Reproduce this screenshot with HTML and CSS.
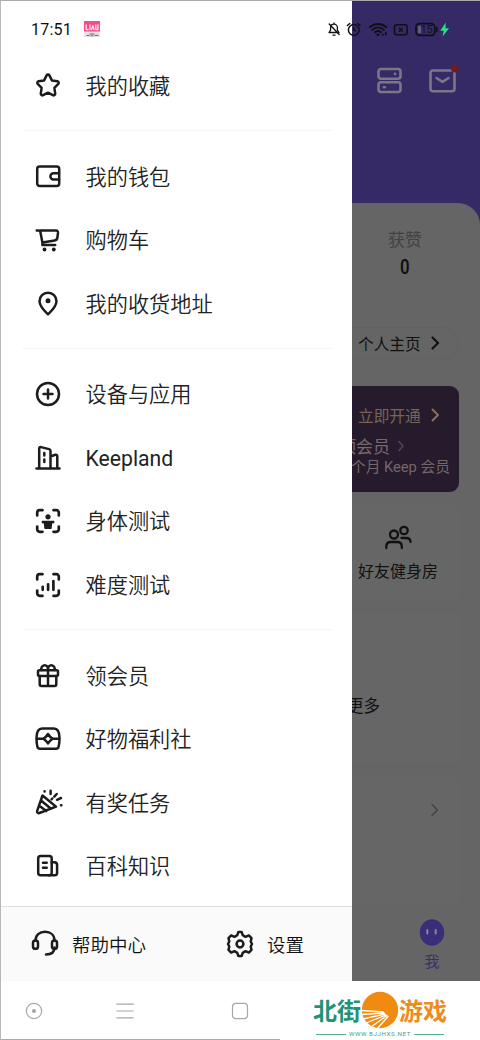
FILE: index.html
```html
<!DOCTYPE html>
<html lang="zh-CN">
<head>
<meta charset="utf-8">
<title>Keep</title>
<link rel="stylesheet" href="styles.css">
</head>
<body>
<div class="phone">
  <div class="status">
    <span class="clock">17:51</span>
    <svg class="app-badge" width="16" height="16" viewBox="0 0 16 16"><rect width="16" height="16" rx="1" fill="#eadfe6"/><path d="M0 0h16v10.5H0z" fill="#ee4f8d"/><path d="M2.2 4v4.6h2M6 4v4.6M7.6 8.6l1.2-4 1.3 4M11.8 4v4.6h2M14 4v4.6" fill="none" stroke="#ffe3ee" stroke-width="1.3"/><path d="M3 14.5h2M6 13h4M7 14.8h2M11 14.4h3" stroke="#60545c" stroke-width=".9"/></svg>
    <svg class="signals" width="124" height="18" viewBox="0 0 124 18" fill="none" stroke="#101014" stroke-width="1.5" stroke-linecap="round" stroke-linejoin="round">
      <path d="M2 12.500h10l-1.600-2.300V7.500a3.400 3.400 0 0 0-6.800 0v2.700zM6 15.200h2M7 3.800V3M2.200 4l10 10.500" stroke-width="1.300"/>
      <circle cx="26.800" cy="10" r="5.400"/><path d="M26.800 7.400V10l1.700.9M20.400 5.500l2.400-2M33.200 5.500l-2.400-2"/>
      <path d="M42.800 7.200c5-4.300 11.500-4.300 16.500 0M45.300 9.800c3.600-3 8-3 11.500 0M48 12.200c2-1.500 4-1.500 6 0M50.100 14.700h1.700M55.800 14.700h.1M58.800 13v1.500" stroke-width="1.900"/>
      <rect x="67.500" y="4.700" width="12.600" height="10" rx="2"/><path d="M72.300 8.200l3 3M75.300 8.200l-3 3"/>
      <rect x="89" y="3.700" width="18.800" height="11.600" rx="3.500" stroke-width="1.700"/><path d="M109.900 7.500v4"/>
      <path d="M91.300 6h2.500v7h-2.500z" fill="#6a6285" stroke="none"/>
      <text x="93.800" y="13.200" class="battery-level">15</text>
      <path d="M118.800 2.500l-5.500 8.200h3.500l-1.200 5.800 6.400-8.200h-3.600z" fill="#2fe08a" stroke="none"/>
    </svg>
  </div>

  <div class="screen">
    <aside class="drawer">
      <nav class="menu">
        <section class="group">
          <a class="row"><svg viewBox="0 0 32 32"><path d="M14.600 5.400a1.600 1.600 0 0 1 2.800 0l2.500 5 5.600.9a1.600 1.600 0 0 1 .8 2.600l-3.900 4 .8 5.700a1.600 1.600 0 0 1-2.300 1.600L16 22.700l-4.900 2.500a1.600 1.600 0 0 1-2.300-1.600l.8-5.700-3.900-4a1.600 1.600 0 0 1 .8-2.600l5.600-.9z"/></svg><span>我的收藏</span></a>
        </section>
        <section class="group">
          <a class="row"><svg viewBox="0 0 32 32"><rect x="5.200" y="5.500" width="22" height="19.500" rx="2.500"/><path d="M27 12.200h-5.500a3.100 3.100 0 0 0 0 6.200H27"/></svg><span>我的钱包</span></a>
          <a class="row"><svg viewBox="0 0 32 32"><path d="M4.700 6.600h1.900c1 0 1.600.5 1.800 1.500l2 10.500 12.300-2.200c1.800-.3 2.500-1.100 2.700-2.900l.6-4.600c.1-1.400-.5-2.300-2-2.300H8M10.400 18.600v2.400h12.800"/><circle cx="12.500" cy="25.500" r="1.900" class="solid"/><circle cx="21.800" cy="25.500" r="1.900" class="solid"/></svg><span>购物车</span></a>
          <a class="row"><svg viewBox="0 0 32 32"><path d="M16 26.300C11.500 22 7.500 18 7.500 13.200a8.500 8.500 0 0 1 17 0c0 4.800-4 8.800-8.500 13.100z"/><circle cx="16" cy="12.800" r="2.500" class="solid"/></svg><span>我的收货地址</span></a>
        </section>
        <section class="group">
          <a class="row"><svg viewBox="0 0 32 32"><circle cx="16" cy="16" r="11"/><path d="M11.500 16h9M16 11.500v9"/></svg><span>设备与应用</span></a>
          <a class="row"><svg viewBox="0 0 32 32"><path d="M4.500 26.500h23M7.200 26V6.500c0-1.200.7-1.700 1.800-1.400l8 2c1 .3 1.500.8 1.500 1.800V26M18.500 14.500l4.800-1.700c1.200-.3 2 .3 2 1.500V26"/><path d="M12.300 11v2.600M12.300 17.500v2.600"/></svg><span class="latin">Keepland</span></a>
          <a class="row"><svg viewBox="0 0 32 32"><path class="corners" d="M5.200 10.500V7.700A2.500 2.500 0 0 1 7.700 5.200h2.800M21.500 5.200h2.800a2.500 2.500 0 0 1 2.500 2.500v2.800M5.200 21.500v2.800a2.500 2.500 0 0 0 2.500 2.500h2.800M21.500 26.800h2.800a2.500 2.500 0 0 0 2.500-2.500v-2.800"/><circle cx="16" cy="11.800" r="2.600" class="solid"/><path class="solid" d="M10.200 15.800h11.700c.8 0 .8 2.400 0 2.500l-1.700.3-.5 4.300c-.2.800-.6 1.200-1.400 1.200h-4.600c-.8 0-1.200-.4-1.400-1.200l-.5-4.300-1.600-.3c-.8-.1-.8-2.500 0-2.500z"/></svg><span>身体测试</span></a>
          <a class="row"><svg viewBox="0 0 32 32"><path class="corners" d="M5.200 10.500V7.700A2.500 2.500 0 0 1 7.700 5.200h2.800M21.500 5.200h2.800a2.500 2.500 0 0 1 2.500 2.500v2.800M5.200 21.500v2.800a2.500 2.500 0 0 0 2.500 2.500h2.800M21.500 26.800h2.800a2.500 2.500 0 0 0 2.500-2.500v-2.800"/><path class="corners" d="M10.700 17.800v3M16.100 15.300v5.500M21.400 12v8.800"/></svg><span>难度测试</span></a>
        </section>
        <section class="group">
          <a class="row"><svg viewBox="0 0 32 32"><rect x="6" y="10.300" width="20" height="5.600" rx="1.500"/><path d="M7.700 16v8.200c0 1.200.6 1.700 1.700 1.700h13.200c1.100 0 1.700-.5 1.700-1.700V16M16 10.300V26M9.500 10a3.200 3.200 0 0 1 6.300-2.500L16 10l.2-2.500A3.200 3.200 0 0 1 22.500 10"/></svg><span>领会员</span></a>
          <a class="row"><svg viewBox="0 0 32 32"><path d="M4.500 14.700c.2-5.500 2-9.100 5.500-9.100h12c3.500 0 5.300 3.600 5.500 9.100v1c0 3-.3 5.500-.9 8-.3 1.300-1.200 2-2.600 2H8c-1.400 0-2.300-.7-2.600-2-.6-2.500-.9-5-.9-8zM4.700 15.700H11M21 15.700h6.300M16 11c1.200 2 2.600 3.400 4.600 4.700-2 1.300-3.400 2.700-4.600 4.700-1.200-2-2.600-3.400-4.600-4.700 2-1.300 3.400-2.700 4.600-4.700z"/></svg><span>好物福利社</span></a>
          <a class="row"><svg viewBox="0 0 32 32"><path d="M10.500 8.500L5.200 23.800c-.5 1.700.5 2.700 2.200 2.200L24 19.600zM9 13.500l10 8.300M7 18.500l7.300 5.500"/><path d="M12.600 4.300v.2M18.600 3.700v3.300M24.700 7l-2.400 2.600M29 11l-4 1.800M29 18.300h.4M20.300 11.500l-.7.800"/></svg><span>有奖任务</span></a>
          <a class="row"><svg viewBox="0 0 32 32"><rect x="6.200" y="6" width="13.500" height="19.200" rx="2.500"/><path d="M19.700 12.300h2.600c1.800 0 2.800 1 2.800 2.800v8c0 1.300-.8 2.100-2.300 2.100h-6M11 12.700h3.700M11 17.700h3.700"/></svg><span>百科知识</span></a>
        </section>
      </nav>
      <footer class="tools">
        <a class="tool help"><svg viewBox="0 0 32 32"><path d="M6.500 12.500C6.500 7 10.500 3.800 16 3.800s9.500 3.200 9.500 8.700M25.500 19.500c0 4.500-3 6.900-8.500 6.900"/><rect x="4" y="12.500" width="5" height="8.300" rx="2.400"/><rect x="23" y="12.500" width="5" height="8.300" rx="2.400"/></svg><span>帮助中心</span></a>
        <a class="tool settings"><svg viewBox="0 0 32 32"><path d="M14.300 4h3.400l1 3.200 2.800 1.600 3.300-1.400 2.700 2.700-.8 3.400 1.300 2.500-1.300 2.500.8 3.400-2.700 2.700-3.300-1.400-2.800 1.600-1 3.200h-3.400l-1-3.200-2.800-1.600-3.300 1.400-2.700-2.700.8-3.400L4 16l1.300-2.500-.8-3.400 2.700-2.700 3.300 1.400 2.800-1.600z"/><circle cx="16" cy="16" r="3.400"/></svg><span>设置</span></a>
      </footer>
    </aside>

    <main class="profile">
      <header class="topbar">
        <svg width="26" height="28" viewBox="0 0 26 28"><rect x="1.500" y="2" width="22" height="9.700" rx="2.500"/><rect x="1.500" y="15.300" width="22" height="9.700" rx="2.500"/><path d="M18 6.900h.1M6.800 20.200h1"/></svg>
        <svg width="32" height="28" viewBox="0 0 32 28"><rect x="2.500" y="3.500" width="24" height="20.700" rx="2.500"/><path d="M8.500 11l6 3.800 6-3.800"/><circle cx="26.800" cy="1.600" r="3.900" class="dot"/></svg>
      </header>
      <div class="sheet">
        <div class="stat"><span>获赞</span><b>0</b></div>
        <div class="home-link"><span>个人主页</span><svg width="12" height="14" viewBox="0 0 12 14"><path d="M3.500 1.500L9 7l-5.500 5.500"/></svg></div>
        <div class="vip">
          <div class="vip-open"><span>立即开通</span><svg width="12" height="14" viewBox="0 0 12 14"><path d="M3.500 1.500L9 7l-5.500 5.500"/></svg></div>
          <div class="vip-name"><span>顶会员</span><svg width="10" height="12" viewBox="0 0 10 12"><path d="M3 1.500L7 6l-4 4.500"/></svg></div>
          <div class="vip-note">个月 Keep 会员</div>
        </div>
        <div class="card friends">
          <svg width="30" height="28" viewBox="0 0 30 28"><circle cx="11" cy="10.500" r="4"/><circle cx="21" cy="6.500" r="3.700"/><path d="M3.300 24v-1.500c0-3 1.700-4.500 4.500-4.500h6.500c2.800 0 4.500 1.500 4.500 4.500V24M18.500 14h4.500c2.800 0 4.500 1.300 4.500 4"/></svg>
          <span>好友健身房</span>
        </div>
        <div class="card more"><span>更多</span></div>
        <div class="card record"><svg width="12" height="16" viewBox="0 0 12 16"><path d="M3 2.500L8.500 8 3 13.500"/></svg></div>
      </div>
      <footer class="tab"><svg width="26" height="28" viewBox="0 0 26 28"><ellipse cx="13" cy="13.500" rx="12.200" ry="13.200"/><path d="M8.300 11v3.500M16.700 11v3.500"/></svg><span>我</span></footer>
    </main>
  </div>

  <div class="bottom">
    <div class="sysnav">
      <svg width="18" height="18" viewBox="0 0 18 18"><circle cx="9" cy="9" r="7.700"/><circle cx="9" cy="9" r="1.400" fill="#999"/></svg>
      <svg width="18" height="18" viewBox="0 0 18 18"><path d="M.8 2.200h16.400M.8 9h16.400M.8 15.800h16.400"/></svg>
      <svg width="18" height="18" viewBox="0 0 18 18"><rect x="1.500" y="1.300" width="15" height="15.400" rx="3.500"/></svg>
    </div>
    <div class="brand">
      <div class="brand-name">
        <span class="green">北街</span>
        <svg width="38" height="38" viewBox="0 0 38 38"><circle cx="19" cy="19" r="18.200" fill="#f08a10"/><path d="M0 19.500l22 1.500M0 23.500l23-1.500M2 28l22-5M5 32l20-8M10 36l16-11.500M16 38l11-12.500" stroke="#fff" stroke-width="1.300"/></svg>
        <span class="orange">游戏</span>
      </div>
      <div class="brand-url"><span>WWW.BJJHXS.NET</span></div>
    </div>
  </div>
</div>
</body>
</html>
```

FILE: styles.css
```css
* { box-sizing: border-box; }
body {
  margin: 0;
  background: #fff;
  font-family: Roboto, "Noto Sans CJK SC", sans-serif;
  color: #222;
}
.phone {
  position: relative;
  width: 480px;
  height: 1040px;
  display: flex;
  flex-direction: column;
  overflow: hidden;
}
svg {
  flex: none;
  display: block;
  fill: none;
  stroke-linecap: round;
  stroke-linejoin: round;
}

/* status bar floats over drawer and page */
.status {
  position: absolute;
  z-index: 2;
  top: 20px;
  left: 31px;
  width: 420px;
  height: 18px;
  display: flex;
  align-items: center;
}
.clock { width: 53px; padding-top: 1px; font-size: 16px; line-height: 18px; color: #111; letter-spacing: .2px; }
.signals { margin-left: auto; }
.battery-level { font-size: 10.5px; fill: #101014; stroke: none; }

.screen {
  display: flex;
  height: 981px;
  border-top: 1px solid #aaa;
}
.drawer {
  width: 352px;
  flex: none;
  display: flex;
  flex-direction: column;
  background: #fff;
  border-left: 1px solid #b8b8b8;
}
.menu { flex: 1; padding-top: 52.5px; }
.group + .group { margin-top: 13px; }
.group + .group::before {
  content: "";
  display: block;
  height: 1px;
  margin: 0 20px 13.3px 21px;
  background: #f6f6f6;
}
.row {
  display: flex;
  align-items: center;
  height: 63.5px;
  padding-left: 31px;
  font-size: 21.2px;
  font-weight: 350;
}
.row svg, .tool svg {
  width: 32px;
  height: 32px;
  stroke: #1c1c1c;
  stroke-width: 2.5;
}
.row svg { margin-top: 1px; }
.row span { margin: -2px 0 0 21.5px; }
.row .latin { margin-top: 2px; font-weight: 400; }
.solid { fill: #1c1c1c; stroke: none; }
.corners { stroke-width: 2.7; }
.tools {
  height: 75px;
  display: flex;
  align-items: center;
  border-top: 1px solid #dedede;
  background: #fafafa;
}
.tool { display: flex; align-items: center; gap: 11px; font-size: 18.5px; font-weight: 350; color: #111; }
.help { width: 223px; padding-left: 28px; }

.profile {
  width: 128px;
  display: flex;
  flex-direction: column;
  background: #352a66;
  overflow: hidden;
}
.topbar {
  flex: none;
  display: flex;
  gap: 25px;
  height: 202px;
  padding: 66px 0 0 25px;
}
.topbar svg { overflow: visible; stroke: #7b7789; stroke-width: 2.6; }
.topbar .dot { fill: #6d1d22; stroke: none; }
.sheet {
  flex: none;
  height: 704px;
  background: #656565;
  border-top-right-radius: 22px;
}
.stat {
  display: flex;
  flex-direction: column;
  align-items: center;
  height: 94px;
  padding: 25px 22px 0 0;
  font-size: 17px;
  line-height: 24px;
  color: #424242;
}
.stat b { margin-top: 3px; font-size: 20px; font-weight: 600; color: #111; transform: scaleX(.84); }
.home-link {
  display: flex;
  align-items: center;
  gap: 8px;
  width: 107px;
  height: 32px;
  margin-top: 30px;
  padding-left: 6px;
  border: 1px solid #626262;
  border-left: 0;
  border-radius: 0 16px 16px 0;
  font-size: 15.7px;
  color: #111;
}
.home-link svg { stroke: #111; stroke-width: 2.2; }
.vip {
  width: 107px;
  height: 106px;
  margin-top: 27px;
  padding-top: 18px;
  border-radius: 0 9px 9px 0;
  background: #251b2d;
  color: #786354;
  white-space: nowrap;
}
.vip-open { display: flex; align-items: center; gap: 8px; height: 22px; padding-left: 6px; font-size: 15.7px; }
.vip-open svg { stroke: #8a7059; stroke-width: 2; }
.vip-name { display: flex; align-items: center; gap: 6px; height: 27px; margin: 6px 0 0 -13px; font-size: 17px; color: #78696a; }
.vip-name svg { stroke: #574a55; stroke-width: 1.3; }
.vip-note { line-height: 18px; margin: -1px 0 0 -1px; font-size: 14.7px; color: #756668; }
.card { width: 109px; background: #666; border-radius: 0 8px 8px 0; }
.friends {
  display: flex;
  flex-direction: column;
  align-items: center;
  height: 98px;
  margin-top: 12px;
  padding: 20px 17px 0 0;
  font-size: 16px;
  line-height: 24px;
  color: #111;
  white-space: nowrap;
}
.friends svg { stroke: #111; stroke-width: 2.3; margin-bottom: 8px; }
.more { height: 152px; margin-top: 10px; padding-top: 82px; font-size: 16.5px; color: #111; }
.more span { display: block; margin-left: -5px; line-height: 26px; }
.record { height: 130px; margin-top: 12px; padding: 26px 0 0 77px; }
.record svg { stroke: #444; stroke-width: 1.5; }
.tab {
  flex: 1;
  display: flex;
  flex-direction: column;
  align-items: center;
  padding: 12px 0 0 32px;
  background: #656565;
  font-size: 15px;
  line-height: 22px;
  color: #3a2e70;
}
.tab svg { fill: #3a2e78; stroke: #8a86a0; stroke-width: 2; margin-bottom: 4px; }
.tab ellipse { stroke: none; }

.bottom {
  display: flex;
  height: 59px;
}
.sysnav {
  width: 280px;
  display: flex;
  gap: 73px;
  padding: 21px 0 0 24px;
  border-left: 1px solid #b8b8b8;
  border-bottom: 1px solid #aaa;
}
.sysnav svg { stroke: #a8a8a8; stroke-width: 1.2; }
.sysnav svg:last-child { margin-left: 24px; }
.brand { flex: 1; padding-top: 10px; }
.brand-name {
  display: flex;
  align-items: center;
  padding-left: 33px;
  height: 38px;
  font-size: 24px;
  font-weight: 700;
}
.brand-name span { margin-top: -2px; }
.green { color: #1f9376; }
.orange { color: #ef8b1b; }
.brand-url {
  display: flex;
  align-items: center;
  gap: 3px;
  width: 128px;
  height: 8px;
  margin: 1px 0 0 36px;
  font-size: 6.2px;
  letter-spacing: .6px;
  color: #459f89;
}
.brand-url::before, .brand-url::after { content: ""; flex: 1; height: 1px; background: #5aab97; }
```
